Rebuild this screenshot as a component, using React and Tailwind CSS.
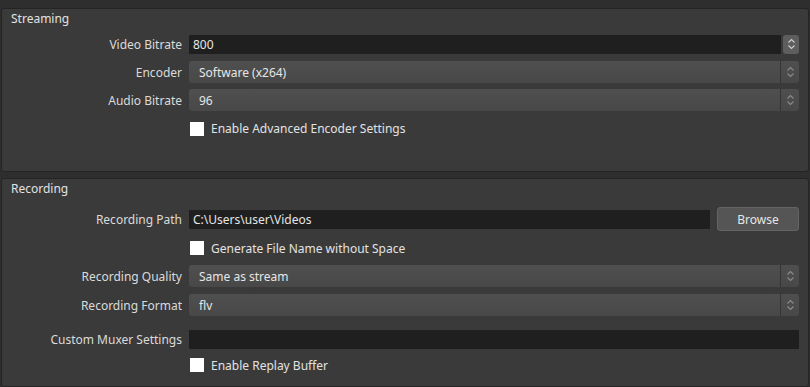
import React from 'react';

const font = { fontFamily: '"Noto Sans", "Open Sans", sans-serif' };

const Chevrons = ({ color = '#9a9a9a' }) => (
    <svg width="9" height="12" viewBox="0 0 9 12" fill="none" stroke={color} strokeWidth="1.1">
        <polyline points="1.5,4.5 4.5,1.5 7.5,4.5" />
        <polyline points="1.5,7.5 4.5,10.5 7.5,7.5" />
    </svg>
);

const Label = ({ children }) => (
    <div className="w-[180px] shrink-0 pt-[2px] text-right text-[#dadada]">{children}</div>
);

const Row = ({ label, h, className = '', children }) => (
    <div className={`flex items-center ${h} ${className}`}>
        <Label>{label}</Label>
        <div className="ml-[7px] flex flex-1 items-center pr-[9px]">{children}</div>
    </div>
);

const Combo = ({ value }) => (
    <div className="flex h-[22px] flex-1 items-center rounded-[3px] bg-gradient-to-b from-[#4f4f4f] to-[#484848]">
        <div className="flex-1 pl-[10px] pt-[2px] text-[#e6e6e6]">{value}</div>
        <div className="flex h-full w-[19px] items-center justify-center border-l border-[#343434]">
            <Chevrons color="#8c8c8c" />
        </div>
    </div>
);

const TextInput = ({ value, className = '' }) => (
    <div className={`flex h-[19px] items-center bg-[#1f1f1f] pl-[4px] pt-[2px] text-[#e6e6e6] ${className}`}>{value}</div>
);

const Check = ({ label }) => (
    <div className="flex items-center">
        <div className="ml-[1px] h-[14px] w-[14px] bg-white" />
        <span className="ml-[7px] pt-[1px] text-[#e2e2e2]">{label}</span>
    </div>
);

const Group = ({ title, className, children }) => (
    <div className={`mx-[1px] flex flex-col rounded-[3px] border border-[#242424] bg-[#3a3a3a] ${className}`}>
        <div className="h-[21px] pl-[9px] pt-[2px] leading-[16px] text-[#e2e2e2]">{title}</div>
        {children}
    </div>
);

export default function App() {
    return (
        <div className="h-[387px] w-[810px] overflow-hidden bg-[#2e2e2e] pt-[8px] text-[12px]" style={font}>
            <Group title="Streaming" className="h-[164px]">
                <Row label="Video Bitrate" h="h-[28px]">
                    <TextInput value="800" className="flex-1" />
                    <div className="ml-[2px] flex h-[19px] w-[16px] items-center justify-center rounded-[3px] bg-[#5e5e5e]">
                        <Chevrons color="#cfcfcf" />
                    </div>
                </Row>
                <Row label="Encoder" h="h-[28px]">
                    <Combo value="Software (x264)" />
                </Row>
                <Row label="Audio Bitrate" h="h-[28px]">
                    <Combo value="96" />
                </Row>
                <Row label="" h="h-[29px]">
                    <Check label="Enable Advanced Encoder Settings" />
                </Row>
            </Group>

            <div className="h-[6px]" />

            <Group title="Recording" className="h-[209px]">
                <Row label="Recording Path" h="h-[30px]" className="mt-[4px]">
                    <TextInput value="C:\Users\user\Videos" className="w-[521px]" />
                    <div className="ml-auto flex h-[24px] w-[82px] items-center justify-center rounded-[3px] border border-[#646464] bg-[#555555] pt-[1px] text-[#e6e6e6]">
                        Browse
                    </div>
                </Row>
                <Row label="" h="h-[28px]">
                    <Check label="Generate File Name without Space" />
                </Row>
                <Row label="Recording Quality" h="h-[28px]">
                    <Combo value="Same as stream" />
                </Row>
                <Row label="Recording Format" h="h-[29px]">
                    <Combo value="flv" />
                </Row>
                <Row label="Custom Muxer Settings" h="h-[28px]" className="mt-[6px]">
                    <TextInput value="" className="flex-1" />
                </Row>
                <Row label="" h="h-[24px]">
                    <Check label="Enable Replay Buffer" />
                </Row>
            </Group>
        </div>
    );
}
